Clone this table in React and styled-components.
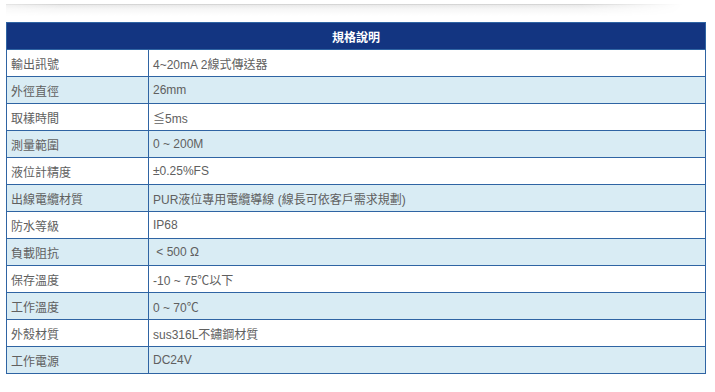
import React from "react";
import styled, { createGlobalStyle } from "styled-components";

const GlobalStyle = createGlobalStyle`
  html, body {
    margin: 0;
    padding: 0;
    background: #ffffff;
  }
  body {
    font-family: "Liberation Sans", "Noto Sans CJK TC", sans-serif;
  }
`;

const Page = styled.div`
  width: 715px;
  height: 392px;
  padding: 4px 0 0 6px;
  box-sizing: border-box;
`;

const TopShade = styled.div`
  width: 677px;
  height: 12px;
  margin-bottom: 6px;
  background: linear-gradient(to bottom, #c2c2c2 0, #e9e9e9 1px, #f6f6f6 5px, #ffffff 12px);
  -webkit-mask-image: linear-gradient(to right, rgba(0, 0, 0, 0.6) 0, #000 8%, #000 85%, transparent 100%);
  mask-image: linear-gradient(to right, rgba(0, 0, 0, 0.6) 0, #000 8%, #000 85%, transparent 100%);
`;

const Table = styled.table`
  width: 700px;
  border-collapse: collapse;
  table-layout: fixed;
  font-size: 12px;
  color: #606060;
`;

const HeadCell = styled.th`
  height: 26px;
  padding: 0;
  background: #133581;
  border: 1px solid #2f64a3;
  color: #ffffff;
  font-weight: bold;
  text-align: center;
`;

const Row = styled.tr`
  background: ${(p) => (p.$alt ? "#d9ecf4" : "#ffffff")};
`;

const Cell = styled.td`
  height: 26px;
  padding: 0 4px;
  border: 1px solid #2f64a3;
  white-space: nowrap;
`;

const specs = [
  ["輸出訊號", "4~20mA 2線式傳送器"],
  ["外徑直徑", "26mm"],
  ["取樣時間", "≦5ms"],
  ["測量範圍", "0 ~ 200M"],
  ["液位計精度", "±0.25%FS"],
  ["出線電纜材質", "PUR液位專用電纜導線 (線長可依客戶需求規劃)"],
  ["防水等級", "IP68"],
  ["負載阻抗", "\u00a0< 500 Ω"],
  ["保存溫度", "-10 ~ 75℃以下"],
  ["工作溫度", "0 ~ 70℃"],
  ["外殼材質", "sus316L不鏽鋼材質"],
  ["工作電源", "DC24V"],
];

const App = () => {
  return (
    <Page>
      <GlobalStyle />
      <TopShade />
      <Table>
        <colgroup>
          <col style={{ width: "142px" }} />
          <col />
        </colgroup>
        <thead>
          <tr>
            <HeadCell colSpan={2}>規格說明</HeadCell>
          </tr>
        </thead>
        <tbody>
          {specs.map(([name, value], i) => (
            <Row key={name} $alt={i % 2 === 1}>
              <Cell>{name}</Cell>
              <Cell>{value}</Cell>
            </Row>
          ))}
        </tbody>
      </Table>
    </Page>
  );
};

export default App;
